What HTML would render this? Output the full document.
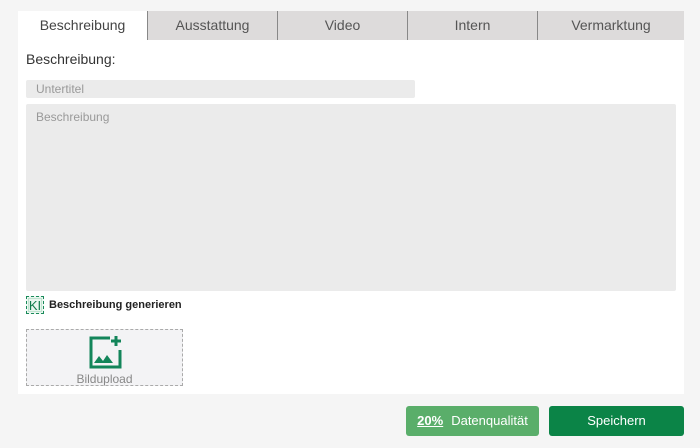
<!DOCTYPE html>
<html><head><meta charset="utf-8"><style>
*{box-sizing:border-box;margin:0;padding:0}
body{width:700px;height:448px;background:#f5f5f5;font-family:"Liberation Sans",sans-serif;position:relative;overflow:hidden}
.panel{position:absolute;left:18px;top:11px;width:666px;height:383px;background:#fff}
.tab{position:absolute;top:11px;height:29px;background:#dddbdb;color:#555;font-size:14px;text-align:center;line-height:28px;border-left:1px solid #888}
.tab.active{background:#fff;border-left:none;color:#444}
.lbl{position:absolute;left:26px;top:51px;font-size:14px;color:#333}
.in{position:absolute;background:#ebebeb;color:#999;font-size:12px;border-radius:2px}
.ki{position:absolute;left:26px;top:296px;font-size:11px;font-weight:bold;color:#222;display:flex;align-items:center}
.kibox{width:18px;height:18px;border:1px dashed #1a8a5a;margin-right:5px;display:flex;align-items:center;justify-content:center;color:#0e7a4a;font-size:13px;font-weight:normal;background:#e9f6ef;outline:1px solid #bfe3cf;outline-offset:-3px}
.up{position:absolute;left:26px;top:329px;width:157px;height:57px;border:1px dashed #aaa;background:#f3f3f5;text-align:center}
.btn{position:absolute;top:406px;height:30px;border-radius:3px;color:#fff;font-size:13px;text-align:center;line-height:30px}
</style></head><body>
<div class="panel"></div>
<div class="tab active" style="left:18px;width:129px">Beschreibung</div>
<div class="tab" style="left:147px;width:130px">Ausstattung</div>
<div class="tab" style="left:277px;width:130px">Video</div>
<div class="tab" style="left:407px;width:130px">Intern</div>
<div class="tab" style="left:537px;width:147px">Vermarktung</div>
<div class="lbl">Beschreibung:</div>
<div class="in" style="left:26px;top:80px;width:389px;height:18px;padding:2px 10px;line-height:14px">Untertitel</div>
<div class="in" style="left:26px;top:104px;width:650px;height:187px;padding:6px 10px">Beschreibung</div>
<div class="ki"><div class="kibox">KI</div>Beschreibung generieren</div>
<div class="up">
<svg width="36" height="34" viewBox="0 0 36 34" style="position:absolute;left:61px;top:6px">
<path d="M22 2H3v29h29V14" fill="none" stroke="#13855a" stroke-width="3"/>
<path d="M28 0v10M23 5h10" stroke="#13855a" stroke-width="3"/>
<path d="M6 27l5-7 4 5 4-6 6 8z" fill="#13855a"/>
</svg>
<div style="position:absolute;left:0;right:0;top:42px;font-size:12px;color:#888">Bildupload</div>
</div>
<div class="btn" style="left:406px;width:133px;background:#5aae6a"><span style="font-weight:bold;text-decoration:underline;margin-right:8px">20%</span>Datenqualität</div>
<div class="btn" style="left:549px;width:135px;background:#0b8447">Speichern</div>
</body></html>
